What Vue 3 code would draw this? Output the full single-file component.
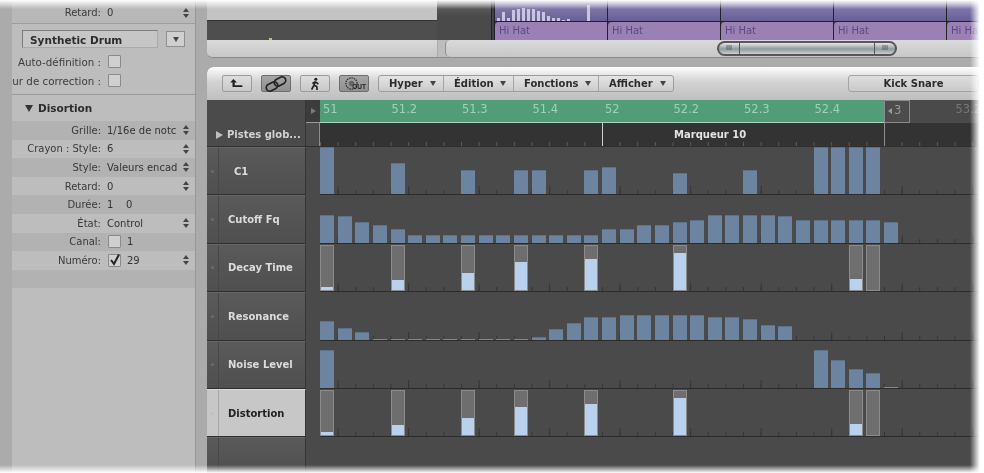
<template>
  <div class="app">
    <aside class="inspector">
      <div class="row top-row">
        <span class="label">Retard:</span><span class="value">0</span>
        <svg class="stepper" viewBox="0 0 6 10" width="6" height="10"><path d="M0 4 L3 0 L6 4 Z M0 6 L3 10 L6 6 Z" fill="#444" /></svg>
      </div>
      <div class="instrument">
        <div class="name-field">Synthetic Drum</div>
        <div class="name-menu"><span class="caret"></span></div>
      </div>
      <div class="check-line"><span class="check-label">Auto-définition :</span><span class="checkbox"></span></div>
      <div class="check-line"><span class="check-label">ur de correction :</span><span class="checkbox"></span></div>
      <div class="section-head"><span class="tri-down"></span>Disortion</div>
      <div v-for="row in params" :key="row.label" class="row" :class="{ band: row.band }">
        <span class="label">{{ row.label }}</span>
        <span v-if="row.check !== undefined" class="checkbox" :class="{ on: row.check }">
          <svg v-if="row.check" viewBox="0 0 14 14" width="14" height="14"><path d="M3 7 L6 11 L11 1.5" fill="none" stroke="#222" stroke-width="2" /></svg>
        </span>
        <span class="value">{{ row.value }}</span>
        <svg v-if="row.stepper" class="stepper" viewBox="0 0 6 10" width="6" height="10"><path d="M0 4 L3 0 L6 4 Z M0 6 L3 10 L6 6 Z" fill="#444" /></svg>
      </div>
      <div class="row band"></div>
    </aside>

    <main class="main">
      <section class="arrange">
        <div class="arrange-tracks">
          <div class="empty-col">
            <div class="empty-top"></div>
            <div class="empty-lane"><span class="blip"></span></div>
          </div>
          <div class="mid-col"></div>
          <div class="parts">
            <div v-for="n in 5" :key="n" class="part">
              <div class="part-top">
                <div v-if="n === 1" class="wave">
                  <i v-for="(h, i) in wave" :key="i" :style="{ height: h + 'px' }"></i>
                </div>
              </div>
              <div class="part-region">Hi Hat</div>
            </div>
          </div>
        </div>
        <div class="scroll-row">
          <div class="scroll-cap"></div>
          <div class="thumb">
            <span class="grip">III</span>
            <span class="thumb-mid"></span>
            <span class="grip">III</span>
          </div>
        </div>
      </section>

      <section class="editor">
        <div class="toolbar">
          <button class="tool">
            <svg viewBox="0 0 20 14" width="18" height="13"><path d="M6 2 L2.5 6 L5 6 L5 11 L16 11 L16 9 L7.5 9 L7.5 6 L10 6 Z" fill="#222" /></svg>
          </button>
          <button class="tool pressed">
            <svg viewBox="0 0 24 16" width="24" height="16"><g fill="none" stroke="#222" stroke-width="1.7"><rect x="2" y="7" width="12" height="7" rx="3.5" transform="rotate(-28 8 10.5)" /><rect x="10" y="2" width="12" height="7" rx="3.5" transform="rotate(-28 16 5.5)" /></g></svg>
          </button>
          <button class="tool">
            <svg viewBox="0 0 14 16" width="12" height="14"><circle cx="8" cy="2.5" r="1.8" fill="#222" /><path d="M7.5 5 L5.5 10 L3 14.5 M6 9.5 L9 11 L9.5 15 M7.5 5.5 L11 8 M7.5 5.5 L4 7.5" fill="none" stroke="#222" stroke-width="2" /></svg>
          </button>
          <button class="tool pressed out">
            <svg viewBox="0 0 16 16" width="15" height="15"><circle cx="8" cy="8" r="6" fill="none" stroke="#333" stroke-width="1.5" stroke-dasharray="1.5 1" /><circle cx="8" cy="8" r="3" fill="#666" /></svg>
            <span class="out-text">OUT</span>
          </button>
          <div class="menus">
            <div v-for="m in menus" :key="m.name" class="menu" :style="{ width: m.width + 'px' }">
              {{ m.name }}<span class="caret"></span>
            </div>
          </div>
          <div class="set-name">Kick Snare</div>
        </div>

        <div class="matrix">
          <div class="ruler-row">
            <div class="head-col global-head"></div>
            <div class="ruler-gutter"><span class="tri-right small"></span></div>
            <div class="ruler">
              <span v-for="r in ruler" :key="r.text" class="bar-mark" :class="{ major: r.major, cycle: r.cycle, outside: r.outside }">{{ r.text }}</span>
            </div>
          </div>
          <div class="global-row">
            <div class="head-col global-head global-name"><span class="tri-right"></span>Pistes glob...</div>
            <div class="marker-gutter"></div>
            <div class="markers"><span class="marker-name">Marqueur 10</span></div>
          </div>

          <div v-for="t in tracks" :key="t.name" class="track">
            <div class="head-col track-head" :class="{ selected: t.selected }">
              <span class="dot-col"><i></i></span>
              <span class="track-name" :class="{ indent: t.name === 'C1' }">{{ t.name }}</span>
            </div>
            <div class="track-gutter"></div>
            <div class="lane">
              <div v-for="c in cellCount" :key="c" class="cell">
                <template v-if="t.values[c - 1] !== undefined">
                  <div v-if="t.framed" class="frame">
                    <div class="fill" :style="{ height: t.values[c - 1] + 'px' }"></div>
                  </div>
                  <div v-else class="bar" :class="{ flat: t.values[c - 1] < 2 }" :style="{ height: t.values[c - 1] + 'px' }"></div>
                </template>
              </div>
            </div>
          </div>

          <div class="track rest">
            <div class="head-col track-head"><span class="dot-col"></span></div>
            <div class="track-gutter"></div>
          </div>
        </div>
      </section>
    </main>

    <div class="fade fade-top"></div>
    <div class="fade fade-bottom"></div>
    <div class="fade fade-right"></div>
  </div>
</template>

<script setup>
const cellCount = 37

const params = [
  { label: 'Grille:', value: '1/16e de notc', stepper: true, band: true },
  { label: 'Crayon : Style:', value: '6', stepper: true },
  { label: 'Style:', value: 'Valeurs encad', stepper: true, band: true },
  { label: 'Retard:', value: '0', stepper: true },
  { label: 'Durée:', value: '1    0', band: true },
  { label: 'État:', value: 'Control', stepper: true },
  { label: 'Canal:', value: '1', check: false, band: true },
  { label: 'Numéro:', value: '29', check: true, stepper: true },
]

const wave = [3, 9, 3, 11, 12, 13, 12, 12, 10, 9, 5, 3, 3, 1, 2, 0, 0, 0, 16]

const menus = [
  { name: 'Hyper', width: 65 },
  { name: 'Édition', width: 70 },
  { name: 'Fonctions', width: 85 },
  { name: 'Afficher', width: 74 },
]

const ruler = [
  { text: '51', major: true },
  { text: '51.2' },
  { text: '51.3' },
  { text: '51.4' },
  { text: '52', major: true },
  { text: '52.2' },
  { text: '52.3' },
  { text: '52.4' },
  { text: '3', cycle: true },
  { text: '53.2', outside: true },
]

// valeurs par pas de grille : index de pas -> hauteur en px
const fromList = (list) => Object.fromEntries(list)
const gates = [[0, 4], [4, 11], [8, 18], [11, 29], [15, 32], [20, 38], [30, 12], [31, 1]]

const tracks = [
  {
    name: 'C1',
    values: fromList([[0, 47], [4, 31], [8, 24], [11, 24], [12, 24], [15, 24], [16, 27], [20, 21], [24, 24], [28, 47], [29, 47], [30, 47], [31, 47]]),
  },
  {
    name: 'Cutoff Fq',
    values: [28, 27, 21, 18, 14, 8, 8, 8, 8, 8, 8, 8, 8, 8, 8, 8, 14, 14, 18, 18, 21, 23, 28, 28, 28, 28, 27, 23, 23, 23, 23, 23, 21],
  },
  { name: 'Decay Time', framed: true, values: fromList(gates) },
  {
    name: 'Resonance',
    values: [19, 12, 8, 1, 1, 1, 1, 1, 1, 1, 1, 1, 3, 11, 17, 23, 23, 25, 25, 25, 25, 25, 23, 23, 21, 15, 14],
  },
  {
    name: 'Noise Level',
    values: fromList([[0, 38], [28, 38], [29, 28], [30, 19], [31, 15], [32, 1]]),
  },
  { name: 'Distortion', framed: true, selected: true, values: fromList(gates) },
]
</script>

<style>
html,
body {
  margin: 0;
  background: #fff;
}
</style>

<style scoped>
.app {
  position: relative;
  display: flex;
  width: 984px;
  height: 473px;
  overflow: hidden;
  background: #ababab;
  font-family: "DejaVu Sans", sans-serif;
  font-size: 10px;
  color: #333;
  filter: blur(0.5px);
}

/* Inspecteur */
.inspector {
  flex: 0 0 184px;
  margin: 0 11px 0 12px;
  background: #bdbdbd;
  border-right: 1px solid #979797;
  box-sizing: border-box;
  overflow: hidden;
}

.row {
  display: flex;
  align-items: center;
  height: 18.6px;
}

.row.band {
  background: #b2b2b2;
}

.top-row {
  height: 24px;
  padding-top: 2px;
  box-sizing: border-box;
  border-bottom: 1px solid #9d9d9d;
  background: #b8b8b8;
}

.label {
  flex: 0 0 89px;
  text-align: right;
  white-space: nowrap;
  color: #3a3a3a;
  margin-right: 6px;
}

.value {
  white-space: pre;
  color: #333;
}

.stepper {
  margin-left: auto;
  margin-right: 6px;
  flex: none;
}

.instrument {
  display: flex;
  gap: 8px;
  padding: 6px 0 4px 10px;
}

.name-field {
  width: 136px;
  height: 18px;
  line-height: 18px;
  padding-left: 7px;
  box-sizing: border-box;
  font-size: 10.5px;
  font-weight: bold;
  color: #2c2c2c;
  background: #c6c6c6;
  border: 1px solid #7d7d7d;
  border-bottom-color: #aaa;
  border-right-color: #aaa;
}

.name-menu {
  width: 19px;
  height: 16px;
  margin-top: 1px;
  display: flex;
  align-items: center;
  justify-content: center;
  background: #cfcfcf;
  border: 1px solid #8f8f8f;
  box-sizing: border-box;
}

.caret {
  display: inline-block;
  width: 0;
  height: 0;
  border-left: 3.5px solid transparent;
  border-right: 3.5px solid transparent;
  border-top: 5px solid #444;
}

.check-line {
  display: flex;
  justify-content: flex-end;
  align-items: center;
  width: 110px;
  height: 19px;
  overflow: hidden;
}

.check-label {
  white-space: nowrap;
  margin-right: 7px;
  font-size: 10.3px;
  color: #3c3c3c;
}

.checkbox {
  flex: 0 0 13px;
  width: 13px;
  height: 13px;
  margin-right: 1px;
  position: relative;
  background: #d0d0d0;
  border: 1px solid #8a8a8a;
  border-radius: 1px;
  box-sizing: border-box;
}

.row .checkbox {
  margin: 0 6px 0 1px;
}

.checkbox svg {
  position: absolute;
  left: -1px;
  top: -2px;
}

.section-head {
  display: flex;
  align-items: center;
  height: 27px;
  margin-top: 4px;
  padding-left: 13px;
  box-sizing: border-box;
  font-size: 10.5px;
  font-weight: bold;
  color: #2c2c2c;
  border-top: 1px solid #9a9a9a;
}

.tri-down {
  width: 0;
  height: 0;
  margin-right: 5px;
  border-left: 4px solid transparent;
  border-right: 4px solid transparent;
  border-top: 7px solid #333;
}

/* Arrange */
.main {
  flex: 1;
  display: flex;
  flex-direction: column;
  min-width: 0;
}

.arrange {
  height: 58px;
  flex: none;
  background: #c9c9c9;
  border-bottom: 1px solid #8b8b8b;
  border-radius: 0 0 0 6px;
  box-sizing: border-box;
  overflow: hidden;
}

.arrange-tracks {
  display: flex;
  height: 40px;
}

.empty-col {
  flex: 0 0 230px;
}

.empty-top {
  height: 21px;
  background: #c4c4c4;
  border-bottom: 1px solid #333;
  box-sizing: border-box;
}

.empty-lane {
  height: 19px;
  background: #4e4e4e;
  position: relative;
}

.blip {
  position: absolute;
  left: 62px;
  bottom: 0;
  width: 3px;
  height: 2px;
  background: #c4c25a;
}

.mid-col {
  flex: 0 0 54px;
  background: linear-gradient(#6b6b6b, #4a4a4a 40%);
  border-right: 1px solid #222;
}

.parts {
  display: flex;
  padding-left: 2px;
  background: #3f3f50;
}

.part {
  flex: 0 0 113px;
  border-left: 1px solid #222;
  box-sizing: border-box;
}

.part-top {
  height: 22px;
  background: linear-gradient(#8f87b5, #675e96);
  border-bottom: 1px solid #222;
  box-sizing: border-box;
  display: flex;
  align-items: flex-end;
}

.wave {
  display: flex;
  align-items: flex-end;
  gap: 2px;
  padding-left: 2px;
}

.wave i {
  width: 3px;
  background: #c9c5de;
}

.part-region {
  height: 18px;
  line-height: 18px;
  padding-left: 4px;
  background: #9b80b4;
  color: #5a4982;
  border-radius: 4px 0 0 0;
}

.scroll-row {
  display: flex;
  height: 17px;
  padding-left: 230px;
  background: linear-gradient(#dadada, #c7c7c7);
}

.scroll-cap {
  width: 13px;
  height: 17px;
  margin-right: 267px;
  padding-left: 7px;
  box-sizing: border-box;
  background: #bdbdbd;
  border-left: 1px solid #aaa;
}

.scroll-cap::before {
  content: "";
  display: block;
  width: 5px;
  height: 17px;
  box-sizing: border-box;
  background: linear-gradient(#dadada, #c7c7c7);
  border-left: 1px solid #8d8d8d;
  border-radius: 6px 0 0 6px;
}

.thumb {
  display: flex;
  align-items: stretch;
  width: 180px;
  height: 15px;
  margin-top: 1px;
  border: 2px solid #575757;
  border-radius: 8px;
  box-sizing: border-box;
  background: linear-gradient(#e6e6e6, #8f9a9a 55%, #c9d0d0);
  overflow: hidden;
}

.grip {
  flex: 0 0 20px;
  font-size: 7px;
  line-height: 11px;
  text-align: center;
  color: #444;
}

.thumb-mid {
  flex: 1;
  border-left: 1px solid #555;
  border-right: 1px solid #555;
}

/* Editeur */
.editor {
  flex: 1;
  display: flex;
  flex-direction: column;
  margin-top: 9px;
  min-height: 0;
  border-radius: 6px 0 0 0;
  overflow: hidden;
  background: #4a4a4a;
}

.toolbar {
  flex: 0 0 33px;
  display: flex;
  align-items: flex-start;
  padding: 8px 0 0 15px;
  box-sizing: border-box;
  background: linear-gradient(#fdfdfd, #d2d2d2 45%, #bfbfbf);
}

.tool {
  position: relative;
  display: flex;
  align-items: center;
  justify-content: center;
  width: 30px;
  height: 17px;
  margin-right: 9px;
  padding: 0;
  background: linear-gradient(#dedede, #c8c8c8);
  border: 1px solid #9c9c9c;
  border-radius: 2px;
  box-sizing: border-box;
}

.tool.pressed {
  background: linear-gradient(#a6a6a6, #8f8f93);
  border-color: #6e6e6e;
}

.out {
  justify-content: flex-start;
  padding-left: 4px;
}

.out-text {
  position: absolute;
  right: 2px;
  bottom: 0;
  font-size: 6.5px;
  line-height: 8px;
  font-weight: bold;
  color: #1f1f1f;
}

.menus {
  display: flex;
  height: 17px;
  border: 1px solid #9c9c9c;
  border-radius: 3px;
  background: linear-gradient(#e4e4e4, #cbcbcb);
  box-sizing: border-box;
}

.menu {
  display: flex;
  align-items: center;
  justify-content: space-between;
  padding: 0 7px 0 10px;
  box-sizing: border-box;
  font-size: 10px;
  font-weight: bold;
  color: #2c2c2c;
  border-right: 1px solid #a5a5a5;
}

.menu:last-child {
  border-right: 0;
}

.set-name {
  width: 131px;
  height: 17px;
  margin-left: 174px;
  line-height: 16px;
  text-align: center;
  font-weight: bold;
  color: #2c2c2c;
  background: linear-gradient(#dedede, #cacaca);
  border: 1px solid #a4a4a4;
  border-radius: 3px;
  box-sizing: border-box;
}

.matrix {
  flex: 1;
  display: flex;
  flex-direction: column;
  min-height: 0;
}

.head-col {
  flex: 0 0 99px;
  box-sizing: border-box;
  border-right: 1px solid #353535;
}

.ruler-row {
  display: flex;
  flex: 0 0 23px;
}

.global-head {
  background: #4b4b4b;
}

.ruler-gutter {
  flex: 0 0 14px;
  display: flex;
  align-items: center;
  justify-content: center;
  background: #3c3c3c;
  border-bottom: 1px solid #9a9a9a;
  box-sizing: border-box;
}

.ruler {
  display: flex;
  flex: 1;
  background: #4a4a4a;
}

.bar-mark {
  flex: 0 0 70.5px;
  box-sizing: border-box;
  padding: 2px 0 0 1px;
  font-size: 11.5px;
  color: #9fd2b8;
  background: #529d79;
  border-bottom: 1px solid #a9d4bc;
}

.bar-mark.major {
  padding-left: 3px;
}

.bar-mark.cycle {
  flex: 0 0 26px;
  margin-right: 44.5px;
  padding-left: 3px;
  color: #9a9a9a;
  background: #4c4c4c;
  border: 1px solid #8a8a8a;
}

.bar-mark.cycle::before {
  content: "";
  display: inline-block;
  margin-right: 2px;
  border-top: 3px solid transparent;
  border-bottom: 3px solid transparent;
  border-right: 4px solid #9a9a9a;
}

.bar-mark.outside {
  color: #767676;
  background: none;
  border: 0;
}

.tri-right {
  width: 0;
  height: 0;
  margin-right: 4px;
  border-top: 4px solid transparent;
  border-bottom: 4px solid transparent;
  border-left: 7px solid #bfbfbf;
}

.tri-right.small {
  margin: 0;
  border-top-width: 3px;
  border-bottom-width: 3px;
  border-left-width: 5px;
  border-left-color: #7a7a7a;
}

.global-row {
  display: flex;
  flex: 0 0 24px;
  border-bottom: 1px solid #2f2f2f;
  box-sizing: border-box;
}

.global-name {
  display: flex;
  align-items: center;
  padding-left: 9px;
  font-weight: bold;
  color: #d2d2d2;
}

.marker-gutter {
  flex: 0 0 14px;
  background: #4b4b4b;
  border-right: 1px solid #8d8d8d;
  box-sizing: border-box;
}

.markers {
  flex: 1;
  position: relative;
  display: flex;
  align-items: center;
  padding-left: 354px;
  font-weight: bold;
  background:
    linear-gradient(90deg, #cfcfcf 1px, transparent 1px) 282px 0 / 1px 100% no-repeat,
    linear-gradient(90deg, #8d8d8d 1px, transparent 1px) 564px 0 / 1px 100% no-repeat,
    linear-gradient(90deg, #5a5a5a 1px, transparent 1px) 0 bottom / 17.63px 4px repeat-x,
    linear-gradient(#333, #333);
}

.marker-name {
  color: #e4e4e4;
}

.track {
  display: flex;
  flex: 0 0 48.4px;
}

.track.rest {
  flex: 1;
}

.track-head {
  display: flex;
  align-items: center;
  background: linear-gradient(#5a5a5a, #4f4f4f);
  border-bottom: 1px solid #2f2f2f;
  border-top: 1px solid #666;
}

.rest .track-head {
  border-bottom: 0;
}

.track-head.selected {
  background: #c7c7c7;
  border-top-color: #d8d8d8;
}

.dot-col {
  align-self: stretch;
  flex: 0 0 11px;
  display: flex;
  align-items: center;
  justify-content: center;
  border-right: 1px solid #484848;
}

.selected .dot-col {
  border-right-color: #a5a5a5;
}

.dot-col i {
  width: 3px;
  height: 3px;
  border-radius: 50%;
  background: #6c6c6c;
}

.selected .dot-col i {
  background: #bfbfbf;
}

.track-name {
  margin-left: 9px;
  font-weight: bold;
  color: #dcdcdc;
}

.track-name.indent {
  margin-left: 15px;
}

.selected .track-name {
  color: #1f1f1f;
}

.track-gutter {
  flex: 0 0 14px;
}

.lane {
  flex: 1;
  display: flex;
  align-items: flex-end;
  height: 100%;
  box-sizing: border-box;
  border-bottom: 1px solid #2c2c2c;
  background:
    linear-gradient(90deg, #353535 1px, transparent 1px) 17.63px bottom / 70.52px 8px repeat-x,
    linear-gradient(90deg, #353535 1px, transparent 1px) 0 bottom / 17.63px 4px repeat-x;
}

.cell {
  flex: 0 0 17.63px;
  display: flex;
  align-items: flex-end;
}

.bar {
  width: 14px;
  background: #6d84a1;
  box-shadow: inset 0 1px 0 #5a7290;
}

.bar.flat {
  background: #878787;
  box-shadow: none;
}

.frame {
  display: flex;
  align-items: flex-end;
  width: 14px;
  height: 46px;
  box-sizing: border-box;
  background: #6e6e6e;
  outline: 1px solid #8c8c8c;
  outline-offset: -1px;
}

.fill {
  width: 100%;
  background: #b9d1ee;
}

/* Ombre du bord de la capture */
.fade {
  position: absolute;
  pointer-events: none;
}

.fade-top {
  left: 0;
  right: 0;
  top: 0;
  height: 9px;
  background: linear-gradient(#fff, rgba(255, 255, 255, 0));
}

.fade-bottom {
  left: 0;
  right: 0;
  bottom: 0;
  height: 8px;
  background: linear-gradient(rgba(255, 255, 255, 0), #fff);
}

.fade-right {
  top: 0;
  bottom: 0;
  right: 0;
  width: 14px;
  background: linear-gradient(90deg, rgba(255, 255, 255, 0), #fff 70%);
}
</style>
